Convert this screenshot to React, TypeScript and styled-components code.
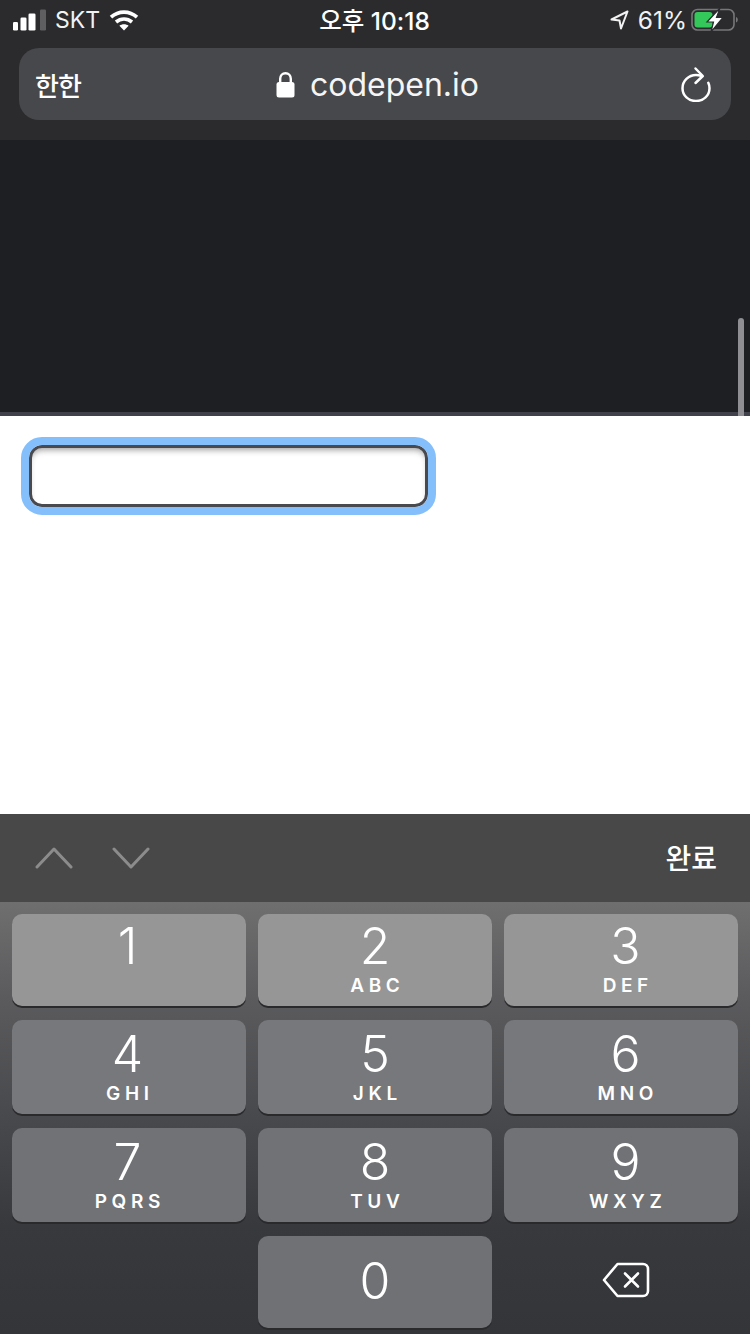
import React from "react";
import styled, { createGlobalStyle } from "styled-components";

const Global = createGlobalStyle`
  html, body { margin: 0; padding: 0; background: #fff; }
  * { box-sizing: border-box; }
  body { font-family: Inter, "Noto Sans CJK KR", sans-serif; }
`;

const Page = styled.div`
  position: relative; width: 750px; height: 1334px; overflow: hidden;
  display: flex; flex-direction: column; background: #fff;
`;
const Chrome = styled.header`
  height: 140px; background: #2b2b2e; color: #fff; padding: 0 0 20px;
  display: flex; flex-direction: column;
`;
const StatusBar = styled.div`
  height: 48px; display: grid; grid-template-columns: 1fr auto 1fr; align-items: center;
  padding: 0 12px 8px 13px; font-size: 23px; color: #f2f2f3;
`;
const StatusGroup = styled.div<{ $end?: boolean }>`
  display: flex; align-items: center; gap: 9px;
  justify-content: ${p => (p.$end ? "flex-end" : "flex-start")};
`;
const Clock = styled.div`
  font-size: 24.5px; font-weight: 500; color: #fff; margin: 0 2px 2px 0;
`;
const Percent = styled.span`
  font-size: 24.5px; margin-right: -5px;
`;
const UrlBar = styled.div`
  margin: 0 19px; height: 72px; border-radius: 20px; background: #47484c;
  display: flex; align-items: center; justify-content: space-between; padding: 0 19px 0 16px;
`;
const AaLabel = styled.span`
  font-family: "Noto Sans CJK KR", sans-serif; font-size: 26px; font-weight: 500; width: 48px; letter-spacing: -1px;
`;
const Domain = styled.div`
  display: flex; align-items: center; gap: 15px; font-size: 32px; font-weight: 400; color: #f5f5f6; margin-left: -8px;
`;
const DarkPane = styled.div`
  height: 276px; background: #1e1f23; border-bottom: 4px solid #40414b;
`;
const ScrollThumb = styled.div`
  position: absolute; left: 738px; top: 318px; width: 6px; height: 98px;
  background: #8f8f93; border-radius: 3px 3px 0 0;
`;
const Content = styled.main`
  height: 398px; background: #fff; padding: 29px 29px 0;
`;
const Field = styled.div`
  width: 399px; height: 62px; border: 3px solid #494a4f; border-radius: 13px;
  outline: 8px solid #84bffb; outline-offset: 0; background: #fff;
  box-shadow: inset 0 5px 6px -3px rgba(0,0,0,0.38);
`;
const Toolbar = styled.div`
  height: 88px; background: #484848; display: flex; align-items: center;
  justify-content: space-between; padding: 0 33px 0 35px;
`;
const Arrows = styled.div`
  display: flex; gap: 39px; color: #8c8c8c;
`;
const Done = styled.span`
  font-family: "Noto Sans CJK KR", sans-serif; font-size: 28px; font-weight: 500; color: #fff; margin-top: -3px;
`;
const Keyboard = styled.div`
  height: 432px; padding: 12px 12px 0;
  background: linear-gradient(180deg, #6f6f6f 0%, #5b5b5e 22%, #48494c 50%, #38393c 75%, #343538 100%);
  display: grid; grid-template-columns: repeat(3, 234px); column-gap: 12px; row-gap: 14px;
  grid-template-rows: 92px 94px 94px 92px;
`;
const Key = styled.div<{ $bg: string; $top: number; $col: number }>`
  border-radius: 10px; background: ${p => p.$bg};
  box-shadow: 0 2px 0 #2a2a2d;
  display: flex; flex-direction: column; align-items: center; color: #fff;
  padding-top: ${p => p.$top}px;
  padding-left: ${p => (p.$col === 2 ? 9 : 0)}px;
  padding-right: ${p => (p.$col === 0 ? 3 : 0)}px;
`;
const Digit = styled.span`
  font-size: 50px; font-weight: 350; line-height: 58px; height: 59px;
`;
const Letters = styled.span`
  font-size: 19px; font-weight: 600; letter-spacing: 4.6px; line-height: 20px; margin-right: -4.6px;
`;
const BlankCell = styled.div``;
const DeleteCell = styled.div`
  display: flex; align-items: center; justify-content: center; padding: 0 0 4px 10px;
`;

const rows = ["#969697", "#77787b", "#717275", "#707174"];
const tops = [3, 5, 5];
const keys: [string, string, number, number][] = [
  ["1", "", 0, 0], ["2", "ABC", 0, 1], ["3", "DEF", 0, 2],
  ["4", "GHI", 1, 0], ["5", "JKL", 1, 1], ["6", "MNO", 1, 2],
  ["7", "PQRS", 2, 0], ["8", "TUV", 2, 1], ["9", "WXYZ", 2, 2],
];

const Signal = () => (
  <svg width="33" height="22" viewBox="0 0 33 22">
    <rect x="0" y="13" width="5" height="8.500" rx="1.300" fill="#fff" />
    <rect x="7.500" y="8.500" width="6" height="13" rx="1.300" fill="#fff" />
    <rect x="15.500" y="4.500" width="7" height="17" rx="1.300" fill="#fff" />
    <rect x="27" y="0.500" width="6" height="21" rx="1.300" fill="#5f5f62" />
  </svg>
);
const Wifi = () => (
  <svg width="30" height="22" viewBox="0 0 30 22" fill="none" stroke="#fff" strokeWidth="3.6">
    <path d="M2 8.200C9.500 1.400 20.500 1.400 28 8.200" />
    <path d="M7 13C11.800 9 18.200 9 23 13" />
    <path d="M15 21.500l-4.600-4.700c2.600-2 6.600-2 9.200 0z" fill="#fff" stroke="none" />
  </svg>
);
const Location = () => (
  <svg width="19" height="20" viewBox="0 0 19 20" fill="none" stroke="#f2f2f3" strokeWidth="2" strokeLinejoin="round">
    <path d="M17.500 1.500L1.500 9.500L9.500 10.500L11 18.500Z" />
  </svg>
);
const Battery = () => (
  <svg width="47" height="24" viewBox="0 0 47 24" fill="none">
    <rect x="1" y="1.500" width="42" height="20.500" rx="5.500" stroke="#77777a" strokeWidth="1.600" />
    <rect x="3.500" y="4" width="18" height="15.500" rx="3" fill="#34c759" />
    <path d="M45 9v5.500c1.200-.4 1.800-1.500 1.800-2.700s-.6-2.400-1.800-2.800z" fill="#77777a" />
    <path d="M29 0L16 14H22.500L20 24L32 9.500H25.500Z" fill="#fff" stroke="#2b2b2e" strokeWidth="1.200" />
  </svg>
);
const Lock = () => (
  <svg width="19" height="27" viewBox="0 0 19 27" fill="none">
    <path d="M4.200 12V7.800C4.200 4.600 6.400 2.200 9.500 2.200s5.300 2.400 5.300 5.600V12" stroke="#fff" strokeWidth="2.400" />
    <rect x="0.500" y="11" width="18" height="15.500" rx="2.500" fill="#fff" />
  </svg>
);
const Reload = () => (
  <svg width="32" height="36" viewBox="0 0 32 36" fill="none" stroke="#fff" strokeWidth="2.500" strokeLinecap="round" strokeLinejoin="round">
    <path d="M21 9.800C19.500 9.300 17.800 9 16 9C8.500 9 2.500 15 2.500 22.300S8.500 35 16 35s13.500-5.400 13.500-12.700c0-2-.4-3.800-1.200-5.500" />
    <path d="M15.500 2.500L22.800 10L15.500 17" />
  </svg>
);
const Up = () => (
  <svg width="38" height="24" viewBox="0 0 38 24" fill="none" stroke="currentColor" strokeWidth="3" strokeLinecap="round" strokeLinejoin="round">
    <path d="M2 21L19 3L36 21" />
  </svg>
);
const Down = () => (
  <svg width="38" height="24" viewBox="0 0 38 24" fill="none" stroke="currentColor" strokeWidth="3" strokeLinecap="round" strokeLinejoin="round">
    <path d="M2 3L19 21L36 3" />
  </svg>
);
const Backspace = () => (
  <svg width="48" height="36" viewBox="0 0 48 36" fill="none" stroke="#fff" strokeWidth="2.600" strokeLinejoin="round" strokeLinecap="round">
    <path d="M15.500 2H41c2.800 0 5 2.200 5 5v22c0 2.800-2.200 5-5 5H15.500L2 18Z" />
    <path d="M23 11.500l13 13M36 11.500l-13 13" />
  </svg>
);

export default function App() {
  return (
    <Page>
      <Global />
      <Chrome>
        <StatusBar>
          <StatusGroup>
            <Signal />
            <span>SKT</span>
            <Wifi />
          </StatusGroup>
          <Clock>오후 10:18</Clock>
          <StatusGroup $end>
            <Location />
            <Percent>61%</Percent>
            <Battery />
          </StatusGroup>
        </StatusBar>
        <UrlBar>
          <AaLabel>한한</AaLabel>
          <Domain>
            <Lock />
            <span>codepen.io</span>
          </Domain>
          <Reload />
        </UrlBar>
      </Chrome>
      <DarkPane />
      <ScrollThumb />
      <Content>
        <Field />
      </Content>
      <Toolbar>
        <Arrows>
          <Up />
          <Down />
        </Arrows>
        <Done>완료</Done>
      </Toolbar>
      <Keyboard>
        {keys.map(([d, l, r, c]) => (
          <Key key={d} $bg={rows[r]} $top={tops[r]} $col={c}>
            <Digit>{d}</Digit>
            {l && <Letters>{l}</Letters>}
          </Key>
        ))}
        <BlankCell />
        <Key $bg={rows[3]} $top={16} $col={1}>
          <Digit>0</Digit>
        </Key>
        <DeleteCell>
          <Backspace />
        </DeleteCell>
      </Keyboard>
    </Page>
  );
}
